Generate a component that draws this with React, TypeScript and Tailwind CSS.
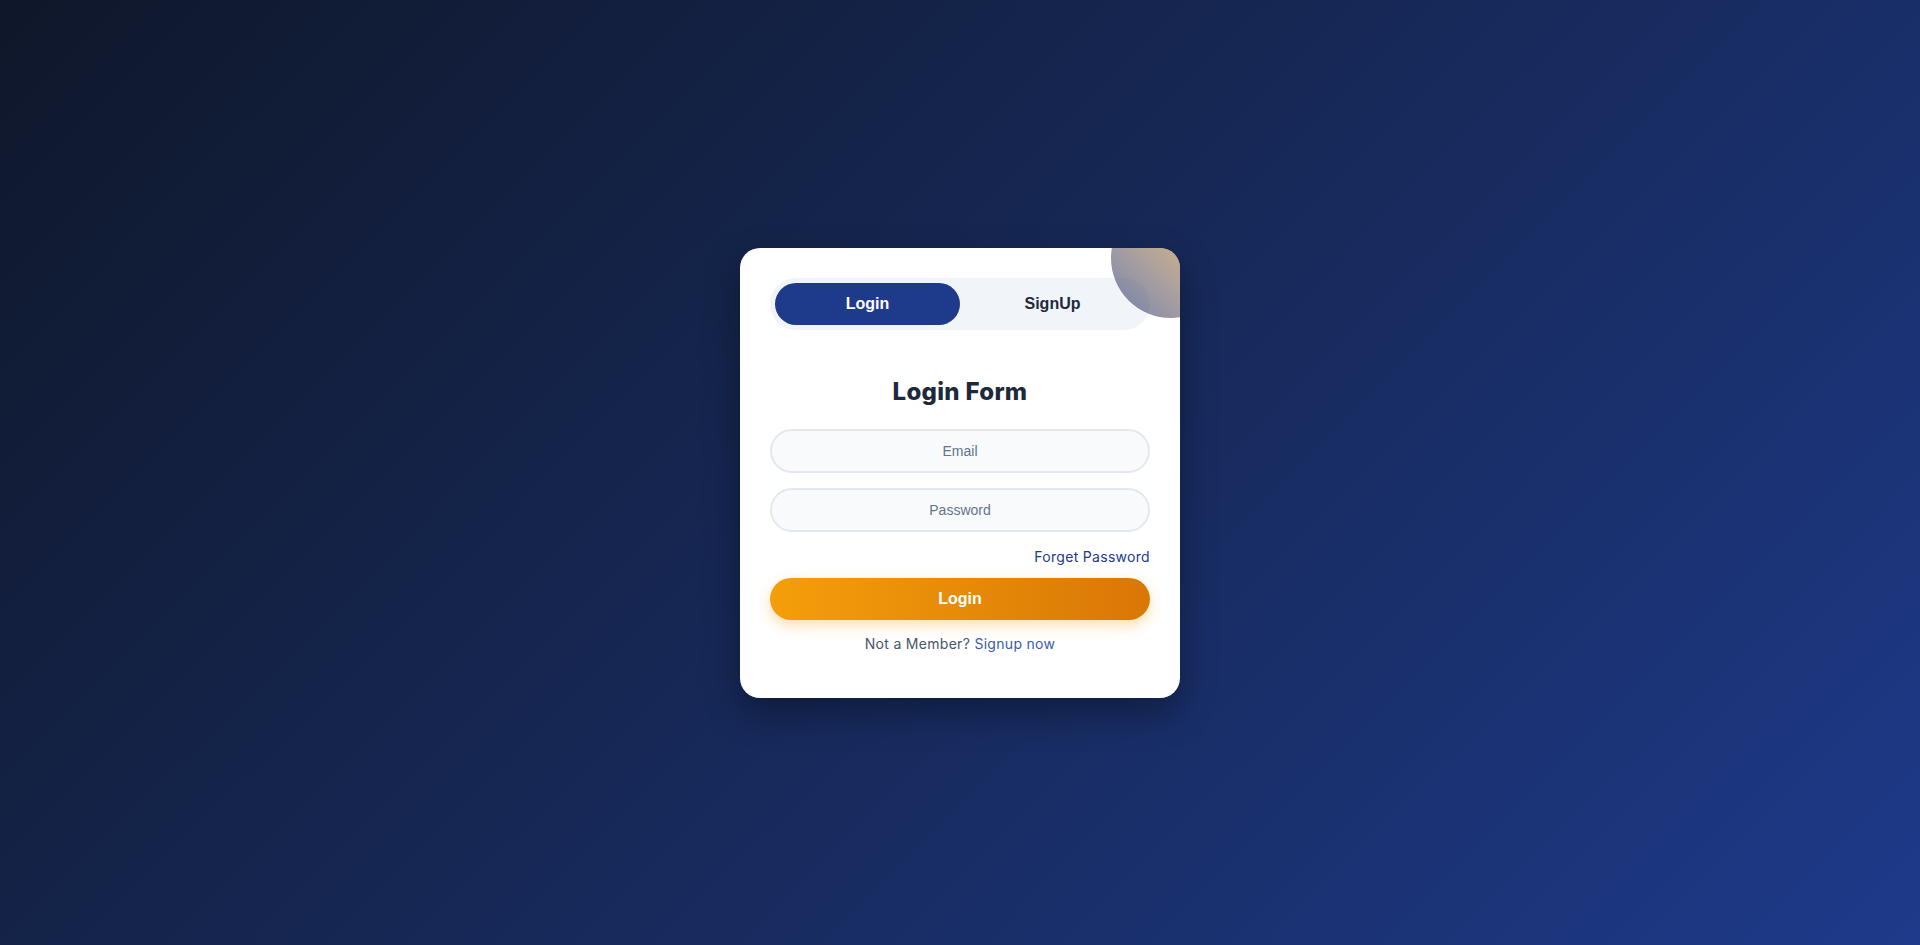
import { useState } from "react";

const poppins = { fontFamily: "Inter, 'Noto Sans', sans-serif" };

export default function App() {
  const [tab, setTab] = useState<"login" | "signup">("login");

  return (
    <div className="min-h-screen w-full flex items-center justify-center bg-linear-135 from-[#0f172a] to-[#1e3a8a]">
      <div className="relative w-[440px] overflow-hidden rounded-[20px] bg-white px-[30px] pt-[30px] pb-[44px] shadow-[0_15px_35px_rgba(0,0,0,0.35)]">
        {/* corner bubble */}
        <div className="pointer-events-none absolute -top-[50px] -right-[51px] z-10 h-[120px] w-[120px] rounded-full bg-linear-to-tr from-[#3f4470] from-15% to-[#a87a34] to-60% opacity-60" />

        <div className="flex h-[52px] rounded-[26px] bg-[#f1f5f9] p-[5px] font-['Liberation_Sans',Arial,sans-serif]">
          <button
            onClick={() => setTab("login")}
            className={`flex-1 rounded-full text-[16px] font-bold ${
              tab === "login" ? "bg-[#1e3a8a] text-white" : "text-[#1e293b]"
            }`}
          >
            Login
          </button>
          <button
            onClick={() => setTab("signup")}
            className={`flex-1 rounded-full text-[16px] font-bold ${
              tab === "signup" ? "bg-[#1e3a8a] text-white" : "text-[#1e293b]"
            }`}
          >
            SignUp
          </button>
        </div>

        <h2
          style={poppins}
          className="mt-[46px] text-center text-[24px] leading-[32px] font-extrabold tracking-[0.3px] text-[#1e293b]"
        >
          Login Form
        </h2>

        <div className="mt-[21px] flex flex-col gap-[15px] font-['Liberation_Sans',Arial,sans-serif]">
          <input
            type="email"
            placeholder="Email"
            className="h-[44px] w-full rounded-full border-2 border-[#e2e8f0] bg-[#f8fafc] text-center text-[14px] text-[#334155] outline-none placeholder:text-[#64748b]"
          />
          <input
            type="password"
            placeholder="Password"
            className="h-[44px] w-full rounded-full border-2 border-[#e2e8f0] bg-[#f8fafc] text-center text-[14px] text-[#334155] outline-none placeholder:text-[#64748b]"
          />
        </div>

        <div style={poppins} className="mt-[15px] text-right text-[14px] leading-[20px] tracking-[0.3px] text-[#1e3a8a]">
          <a href="#">Forget Password</a>
        </div>

        <button className="mt-[11px] h-[42px] w-full rounded-full bg-linear-to-r from-[#f59e0b] to-[#d97706] font-['Liberation_Sans',Arial,sans-serif] text-[16px] font-bold text-white shadow-[0_5px_14px_rgba(245,158,11,0.35)]">
          Login
        </button>

        <p style={poppins} className="mt-[14px] text-center text-[14px] leading-[20px] tracking-[0.3px] text-[#475569]">
          Not a Member? <a href="#" className="text-[#3b5bab]">Signup now</a>
        </p>
      </div>
    </div>
  );
}
